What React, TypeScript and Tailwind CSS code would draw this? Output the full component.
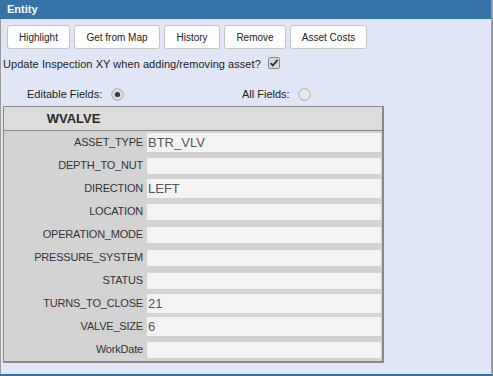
import React from "react";

const rows: { label: string; value: string }[] = [
  { label: "ASSET_TYPE", value: "BTR_VLV" },
  { label: "DEPTH_TO_NUT", value: "" },
  { label: "DIRECTION", value: "LEFT" },
  { label: "LOCATION", value: "" },
  { label: "OPERATION_MODE", value: "" },
  { label: "PRESSURE_SYSTEM", value: "" },
  { label: "STATUS", value: "" },
  { label: "TURNS_TO_CLOSE", value: "21" },
  { label: "VALVE_SIZE", value: "6" },
  { label: "WorkDate", value: "" },
];

const buttons: { text: string; w: string }[] = [
  { text: "Highlight", w: "w-[63px]" },
  { text: "Get from Map", w: "w-[86px]" },
  { text: "History", w: "w-[56px]" },
  { text: "Remove", w: "w-[62px]" },
  { text: "Asset Costs", w: "w-[77px]" },
];

function Radio({ checked }: { checked: boolean }) {
  return (
    <svg width="13" height="13" viewBox="0 0 13 13">
      <circle cx="6.5" cy="6.5" r="5.8" fill={checked ? "#dcdcdc" : "#e8e8e8"} stroke="#a9a9a9" strokeWidth="1" />
      {checked && <circle cx="6.5" cy="6.5" r="2.6" fill="#3a3a3a" />}
    </svg>
  );
}

function Checkbox() {
  return (
    <svg width="12" height="12" viewBox="0 0 12 12">
      <rect x="0.5" y="0.5" width="11" height="11" rx="1" fill="#d8d8d8" stroke="#8a8a8a" />
      <path d="M2.6 6.2 L4.8 8.5 L9.6 2.8" fill="none" stroke="#2e2e2e" strokeWidth="1.8" />
    </svg>
  );
}

export default function App() {
  return (
    <div className="w-[493px] h-[376px] flex flex-col bg-[#e0e6f6] border-r-2 border-r-[#9a9a9a] border-b-2 border-b-[#3572a8] font-['Liberation_Sans',Arial,sans-serif] text-[#222]">
      <div className="h-[19px] bg-[#3572a8] pl-[7px] flex items-center text-white font-bold text-[11px] leading-none shrink-0">
        Entity
      </div>
      <div className="flex-1 border-l border-l-[#9a9a9a] pl-[2px]">
        <div className="flex gap-[4px] mt-[6px] ml-[4px]">
          {buttons.map((b) => (
            <div
              key={b.text}
              className={`${b.w} h-[24px] bg-white border border-[#c5c5c5] rounded-[3px] flex items-center justify-center text-[10px] text-[#222]`}
            >
              {b.text}
            </div>
          ))}
        </div>
        <div className="h-[19px] mt-[6px] flex items-center text-[11px]">
          <span className="tracking-[0.05px]">Update Inspection XY when adding/removing asset?</span>
          <span className="ml-[7px] flex items-center -mt-[3px]">
            <Checkbox />
          </span>
        </div>
        <div className="h-[19px] mt-[11px] flex items-center text-[11px]">
          <div className="w-[239px] pl-[24px] flex items-center">
            <span>Editable Fields:</span>
            <span className="ml-[9px] flex items-center">
              <Radio checked />
            </span>
          </div>
          <div className="flex items-center">
            <span>All Fields:</span>
            <span className="ml-[8px] flex items-center">
              <Radio checked={false} />
            </span>
          </div>
        </div>
        <div className="mt-[2px] w-[381px] border-l border-t border-r-2 border-b-2 border-[#888] bg-[#d3d3d3]">
          <div className="h-[24px] bg-[#dcdcdc] border-b border-[#888] flex items-center">
            <div className="w-[139px] text-center font-bold text-[13px] text-[#2a2a2a]">WVALVE</div>
          </div>
          {rows.map((r) => (
            <div key={r.label} className="h-[23px] flex items-center">
              <div className="w-[139px] text-right text-[11px] tracking-[-0.2px] text-[#333]">{r.label}</div>
              <div
                className={`ml-[4px] w-[234px] bg-[#f3f3f3] flex items-center pl-[1px] text-[13px] text-[#555] ${
                  r.value ? "h-[19px]" : "h-[16px]"
                }`}
              >
                {r.value}
              </div>
            </div>
          ))}
        </div>
      </div>
    </div>
  );
}
